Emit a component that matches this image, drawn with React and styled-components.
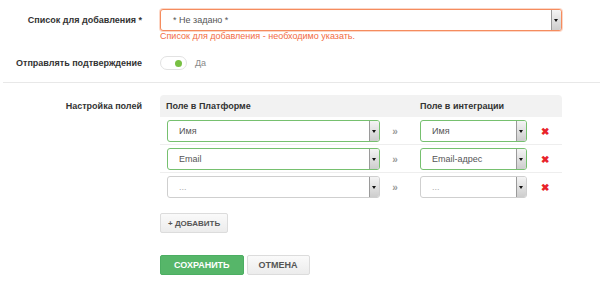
import React from "react";
import styled, { createGlobalStyle } from "styled-components";

const GlobalStyle = createGlobalStyle`
  body {
    margin: 0;
    background: #fff;
    font-family: "Liberation Sans", Arial, sans-serif;
    font-size: 9px;
    color: #333;
  }
`;

const Page = styled.div`
  width: 600px;
  padding-top: 9px;
`;

const FormRow = styled.div`
  display: grid;
  grid-template-columns: 142px 402px;
  column-gap: 18px;
  margin-bottom: ${(p) => p.gap || 0}px;
`;

const Label = styled.div`
  text-align: right;
  font-weight: bold;
  font-size: 9px;
  line-height: 22px;
  color: #333;
  white-space: nowrap;
`;

const Field = styled.div`
  display: flex;
  flex-direction: column;
`;

const SelectBox = styled.div`
  position: relative;
  box-sizing: border-box;
  height: 22px;
  width: ${(p) => p.width || "100%"};
  border: 1px solid ${(p) => (p.state === "error" ? "#f58c5e" : p.state === "ok" ? "#76c06f" : "#cfcfcf")};
  border-radius: 3px;
  background: #fff;
  display: flex;
  align-items: center;
  padding-left: ${(p) => p.pad || 10}px;
  color: ${(p) => (p.empty ? "#aaa" : "#555")};
  font-size: 9px;
  box-shadow: ${(p) => (p.state === "error" ? "0 0 0 1px rgba(245,140,94,0.35)" : "none")};
`;

const Arrow = styled.span`
  position: absolute;
  right: 0;
  top: 0;
  bottom: 0;
  width: 9px;
  border-left: 1px solid #9a9a9a;
  border-radius: 0 2px 2px 0;
  background: linear-gradient(#f4f4f4, #cdcdcd);
  &::after {
    content: "";
    position: absolute;
    left: 2px;
    top: 9px;
    border-left: 2.5px solid transparent;
    border-right: 2.5px solid transparent;
    border-top: 3px solid #111;
  }
`;

const ErrorText = styled.div`
  color: #f26b43;
  font-size: 9px;
  line-height: 11px;
`;

const ToggleWrap = styled.div`
  display: flex;
  align-items: center;
  height: 22px;
  gap: 8px;
  color: #888;
`;

const Toggle = styled.div`
  position: relative;
  box-sizing: border-box;
  width: 27px;
  height: 14px;
  border: 1px solid #e2e2e2;
  border-radius: 7px;
  background: #fff;
  &::after {
    content: "";
    position: absolute;
    right: 4px;
    top: 2.5px;
    width: 7px;
    height: 7px;
    border-radius: 50%;
    background: #78c043;
  }
`;

const Divider = styled.hr`
  border: none;
  border-top: 1px solid #e8e8e8;
  margin: 8px 0 12px 3px;
`;

const Table = styled.div`
  display: flex;
  flex-direction: column;
`;

const Head = styled.div`
  display: grid;
  grid-template-columns: 254px 1fr;
  padding-left: 6px;
  height: 22px;
  align-items: center;
  background: #f2f2f2;
  border-radius: 4px 4px 0 0;
  font-weight: bold;
  color: #333;
`;

const MapRow = styled.div`
  display: grid;
  grid-template-columns: 213px 40px 107px 35px;
  align-items: center;
  padding: 3px 0 2px 7px;
  border-bottom: 1px solid ${(p) => (p.last ? "transparent" : "#eeeeee")};
`;

const Chevron = styled.span`
  text-align: center;
  padding-right: 10px;
  color: #999;
  font-size: 10px;
  font-weight: bold;
`;

const Remove = styled.span`
  text-align: center;
  color: #e8232a;
  font-size: 10px;
  font-weight: bold;
`;

const Btn = styled.button`
  box-sizing: border-box;
  height: ${(p) => p.h || 20}px;
  padding: 0 ${(p) => p.px || 10}px;
  border-radius: 2px;
  font-family: "Liberation Sans", Arial, sans-serif;
  font-weight: bold;
  font-size: ${(p) => p.fs || 9}px;
  text-transform: uppercase;
  cursor: pointer;
  border: 1px solid ${(p) => (p.primary ? "#4cae62" : "#dcdcdc")};
  background: ${(p) => (p.primary ? "#56b669" : "linear-gradient(#fafafa, #ececec)")};
  color: ${(p) => (p.primary ? "#fff" : "#555")};
`;

const AddRow = styled.div`
  margin-top: 12px;
`;

const Actions = styled.div`
  display: flex;
  gap: 3px;
  margin-top: 22px;
`;

const rows = [
  { left: "Имя", right: "Имя", ok: true },
  { left: "Email", right: "Email-адрес", ok: true },
  { left: "...", right: "...", ok: false },
];

export default function App() {
  return (
    <Page>
      <GlobalStyle />
      <FormRow gap={10}>
        <Label>Список для добавления *</Label>
        <Field>
          <SelectBox state="error" pad={12}>
            * Не задано *
            <Arrow />
          </SelectBox>
          <ErrorText>Список для добавления - необходимо указать.</ErrorText>
        </Field>
      </FormRow>
      <FormRow>
        <Label>Отправлять подтверждение</Label>
        <ToggleWrap>
          <Toggle />
          Да
        </ToggleWrap>
      </FormRow>
      <Divider />
      <FormRow>
        <Label>Настройка полей</Label>
        <Field>
          <Table>
            <Head>
              <span>Поле в Платформе</span>
              <span>Поле в интеграции</span>
            </Head>
            {rows.map((r, i) => (
              <MapRow key={i} last={i === rows.length - 1}>
                <SelectBox state={r.ok ? "ok" : ""} empty={!r.ok} pad={11}>
                  {r.left}
                  <Arrow />
                </SelectBox>
                <Chevron>»</Chevron>
                <SelectBox state={r.ok ? "ok" : ""} empty={!r.ok} pad={11}>
                  {r.right}
                  <Arrow />
                </SelectBox>
                <Remove>✖</Remove>
              </MapRow>
            ))}
          </Table>
          <AddRow>
            <Btn px={7} fs={8}>+ Добавить</Btn>
          </AddRow>
          <Actions>
            <Btn primary px={13}>Сохранить</Btn>
            <Btn px={11}>Отмена</Btn>
          </Actions>
        </Field>
      </FormRow>
    </Page>
  );
}
